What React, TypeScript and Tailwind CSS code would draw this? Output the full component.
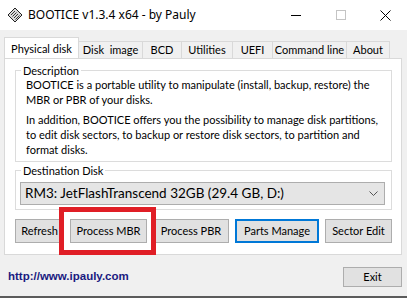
import React from "react";

const font = { fontFamily: 'Lato, "Noto Sans", sans-serif' };

function Btn({ children, w, primary }: { children: React.ReactNode; w: string; primary?: boolean }) {
  return (
    <div
      className={`${w} h-[24px] flex items-center justify-center bg-[#e1e1e1] text-[11px] text-black whitespace-nowrap ${
        primary ? "border-2 border-[#0078d7]" : "border border-[#adadad]"
      }`}
    >
      {children}
    </div>
  );
}

function Tab({ label, w, selected }: { label: string; w: string; selected?: boolean }) {
  if (selected) {
    return (
      <div className={`${w} h-[21px] bg-white border border-b-0 border-[#d9d9d9] flex items-start justify-center pt-[3px] text-[11px] whitespace-pre relative z-10 -mb-px`}>
        {label}
      </div>
    );
  }
  return (
    <div className={`${w} h-[17px] mt-[4px] bg-[#f0f0f0] border border-l-0 border-b-0 border-[#d9d9d9] flex items-center justify-center text-[11px] whitespace-pre`}>
      {label}
    </div>
  );
}

export default function App() {
  return (
    <div className="w-[407px] h-[298px] bg-[#f0f0f0] overflow-hidden flex flex-col relative" style={font}>
      {/* Title bar */}
      <div className="h-[30px] bg-white flex items-center shrink-0">
        <svg width="16" height="16" viewBox="0 0 16 16" className="ml-[7px]">
          <path d="M8 1 L15 8 L8 15 L1 8 Z" fill="#d8d8d8" stroke="#222" strokeWidth="1" />
          <path d="M4 8 L8 4 M5.5 9.5 L9.5 5.5 M7 11 L11 7 M8.5 12.5 L12.5 8.5" stroke="#222" strokeWidth="0.9" />
        </svg>
        <span className="ml-[5px] text-[12px] text-black" style={{ fontFamily: '"Noto Sans", sans-serif' }}>
          BOOTICE v1.3.4 x64 - by Pauly
        </span>
        <div className="ml-auto flex items-center h-full">
          <div className="w-[46px] h-full flex items-center justify-center">
            <div className="w-[10px] h-px bg-black" />
          </div>
          <div className="w-[44px] h-full flex items-center justify-center">
            <div className="w-[10px] h-[10px] border border-[#c4c4c4]" />
          </div>
          <div className="w-[44px] h-full flex items-center justify-center">
            <svg width="11" height="11" viewBox="0 0 11 11">
              <path d="M0.5 0.5 L10.5 10.5 M10.5 0.5 L0.5 10.5" stroke="#000" strokeWidth="1" />
            </svg>
          </div>
        </div>
      </div>

      {/* Tabs */}
      <div className="flex items-start pl-[4px] pt-[7px] h-[28px] shrink-0">
        <Tab label="Physical disk" w="w-[75px]" selected />
        <Tab label="Disk  image" w="w-[64px]" />
        <Tab label="BCD" w="w-[39px]" />
        <Tab label="Utilities" w="w-[51px]" />
        <Tab label="UEFI" w="w-[40px]" />
        <Tab label="Command line" w="w-[74px]" />
        <Tab label="About" w="w-[43px]" />
      </div>

      {/* Panel */}
      <div className="mx-[4px] w-[398px] h-[197px] bg-white border border-[#d9d9d9] pl-[10px] pr-[9px] pt-[6px] flex flex-col shrink-0">
        {/* Description group */}
        <div className="relative border border-[#dcdcdc] h-[92px] mt-[5px] pl-[10px] pt-[6px] text-[11px] leading-[15px] text-black whitespace-nowrap">
          <span className="absolute -top-[8px] left-[5px] bg-white px-[2px] leading-[15px]">Description</span>
          <p>
            BOOTICE is a portable utility to manipulate (install, backup, restore) the
            <br />
            MBR or PBR of your disks.
          </p>
          <p className="mt-[5px]">
            In addition, BOOTICE offers you the possibility to manage disk partitions,
            <br />
            to edit disk sectors, to backup or restore disk sectors, to partition and
            <br />
            format disks.
          </p>
        </div>

        {/* Destination disk */}
        <div className="relative border border-[#dcdcdc] h-[40px] mt-[8px] pl-[4px] pr-[6px] pt-[11px]">
          <span className="absolute -top-[8px] left-[5px] bg-white px-[2px] text-[11px] leading-[15px]">Destination Disk</span>
          <div className="h-[23px] bg-[#e5e5e5] border border-[#adadad] flex items-center pl-[4px] pr-[6px] text-[13.5px]">
            <span>RM3: JetFlashTranscend 32GB (29.4 GB, D:)</span>
            <svg width="9" height="6" viewBox="0 0 9 6" className="ml-auto">
              <path d="M0.5 0.5 L4.5 4.5 L8.5 0.5" stroke="#555" fill="none" strokeWidth="1" />
            </svg>
          </div>
        </div>

        {/* Buttons */}
        <div className="flex gap-[6px] mt-[9px]">
          <Btn w="w-[49px]">Refresh</Btn>
          <Btn w="w-[77px]">Process MBR</Btn>
          <Btn w="w-[76px]">Process PBR</Btn>
          <Btn w="w-[84px]" primary>Parts Manage</Btn>
          <Btn w="w-[67px]">Sector Edit</Btn>
        </div>
      </div>

      {/* Footer */}
      <div className="flex items-center justify-between pl-[8px] pr-[5px] mt-[12px]">
        <span className="text-[11.5px] font-bold text-[#1a1a80]" style={{ fontFamily: '"Liberation Sans", sans-serif' }}>
          http://www.ipauly.com
        </span>
        <div className="w-[59px] h-[20px] bg-[#e1e1e1] border border-[#adadad] flex items-center justify-center text-[11px]">Exit</div>
      </div>

      <div className="absolute left-0 right-0 bottom-0 h-[2px] bg-[#5b5b5b]" />

      {/* Red highlight overlay */}
      <div className="absolute left-[59px] top-[207px] w-[97px] h-[48px] border-[5px] border-[#e01e26]" />
    </div>
  );
}
